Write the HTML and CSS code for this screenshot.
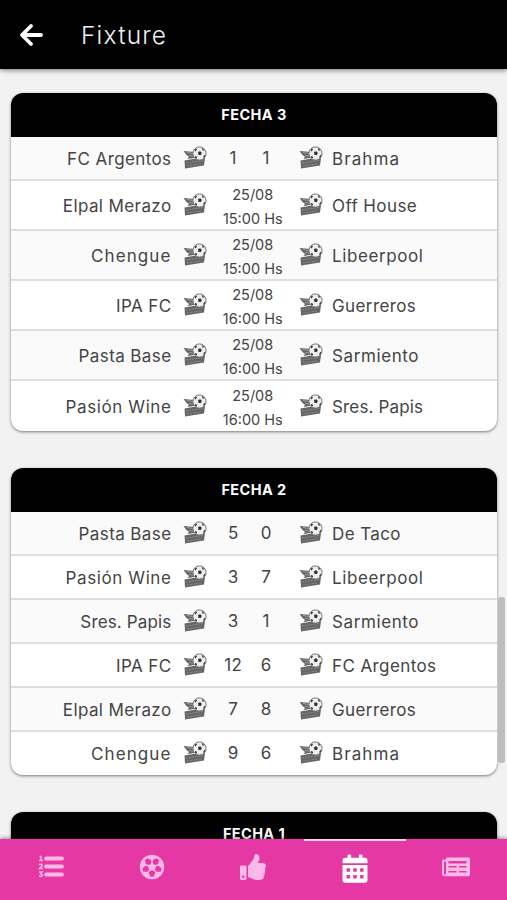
FILE: index.html
```
<!DOCTYPE html>
<html lang="es">
<head>
<meta charset="utf-8">
<title>Fixture</title>
<link rel="stylesheet" href="styles.css">
</head>
<body>
<svg class="defs" width="0" height="0">
  <symbol id="crest" viewBox="0 0 24 24">
    <path d="M.5 5 12 6l-1 6-6.500 1L6 11 3.500 9z" fill="#666"/>
    <path d="M4 6.500l6 1M6 9.500l4 .5" stroke="#aaa" stroke-width=".8"/>
    <path d="M1.500 14.500 13 12.500l9-.5-1 7.500L2 22.500z" fill="#666"/>
    <path d="M3 17l17-2.500M4 20l14-2" stroke="#8c8c8c" stroke-width=".9" stroke-dasharray="2 1"/>
    <circle cx="16.500" cy="7.500" r="6.600" fill="#eee" stroke="#777" stroke-width="1"/>
    <path d="M15 6l2.200-.8 1.600 1.600-.8 2.200h-2.500zM11.500 4l1.500-1.500 1 1-1.500 2zM19 1.800l2.500 2.500-2 .5zM21 9.500l1.500-1-1 3h-1.500zM12 10l2 .7v1.800l-2-1z" fill="#333"/>
  </symbol>
</svg>
<header class="appbar">
  <svg class="back" viewBox="0 0 24 24"><path d="M12 3 3 12l9 9M4 12h18" fill="none" stroke="#fff" stroke-width="3.800" stroke-linecap="round" stroke-linejoin="round"/></svg>
  <h1>Fixture</h1>
</header>
<main>
  <section class="card">
    <h2>FECHA 3</h2>
    <div class="row"><span class="home">FC Argentos</span><svg class="crest"><use href="#crest"/></svg><div class="score"><b>1</b><b>1</b></div><svg class="crest"><use href="#crest"/></svg><span class="away wider">Brahma</span></div>
    <div class="row tall"><span class="home">Elpal Merazo</span><svg class="crest"><use href="#crest"/></svg><div class="date"><span>25/08</span><span>15:00 Hs</span></div><svg class="crest"><use href="#crest"/></svg><span class="away">Off House</span></div>
    <div class="row tall"><span class="home wider">Chengue</span><svg class="crest"><use href="#crest"/></svg><div class="date"><span>25/08</span><span>15:00 Hs</span></div><svg class="crest"><use href="#crest"/></svg><span class="away wide">Libeerpool</span></div>
    <div class="row tall"><span class="home">IPA FC</span><svg class="crest"><use href="#crest"/></svg><div class="date"><span>25/08</span><span>16:00 Hs</span></div><svg class="crest"><use href="#crest"/></svg><span class="away">Guerreros</span></div>
    <div class="row tall"><span class="home">Pasta Base</span><svg class="crest"><use href="#crest"/></svg><div class="date"><span>25/08</span><span>16:00 Hs</span></div><svg class="crest"><use href="#crest"/></svg><span class="away wide">Sarmiento</span></div>
    <div class="row tall"><span class="home wide">Pasión Wine</span><svg class="crest"><use href="#crest"/></svg><div class="date"><span>25/08</span><span>16:00 Hs</span></div><svg class="crest"><use href="#crest"/></svg><span class="away tight">Sres. Papis</span></div>
  </section>
  <section class="card">
    <h2>FECHA 2</h2>
    <div class="row"><span class="home">Pasta Base</span><svg class="crest"><use href="#crest"/></svg><div class="score"><b>5</b><b>0</b></div><svg class="crest"><use href="#crest"/></svg><span class="away">De Taco</span></div>
    <div class="row"><span class="home wide">Pasión Wine</span><svg class="crest"><use href="#crest"/></svg><div class="score"><b>3</b><b>7</b></div><svg class="crest"><use href="#crest"/></svg><span class="away wide">Libeerpool</span></div>
    <div class="row"><span class="home tight">Sres. Papis</span><svg class="crest"><use href="#crest"/></svg><div class="score"><b>3</b><b>1</b></div><svg class="crest"><use href="#crest"/></svg><span class="away wide">Sarmiento</span></div>
    <div class="row"><span class="home">IPA FC</span><svg class="crest"><use href="#crest"/></svg><div class="score"><b>12</b><b>6</b></div><svg class="crest"><use href="#crest"/></svg><span class="away">FC Argentos</span></div>
    <div class="row"><span class="home">Elpal Merazo</span><svg class="crest"><use href="#crest"/></svg><div class="score"><b>7</b><b>8</b></div><svg class="crest"><use href="#crest"/></svg><span class="away">Guerreros</span></div>
    <div class="row"><span class="home wider">Chengue</span><svg class="crest"><use href="#crest"/></svg><div class="score"><b>9</b><b>6</b></div><svg class="crest"><use href="#crest"/></svg><span class="away wider">Brahma</span></div>
  </section>
  <section class="card">
    <h2>FECHA 1</h2>
  </section>
</main>
<div class="scrollbar"></div>
<nav class="tabs">
  <a><svg width="26" height="26" viewBox="0 0 26 26"><path d="M8 4.500h16M8 12.500h16M8 20.500h16" stroke="currentColor" stroke-width="3.800" stroke-linecap="round"/><path d="M1.500 2.500h1.500v4M1 6.500h4M1 10.500h3v1.500l-2.500 2.500h3.500M1 18h3.200l-1.500 2q2 0 1.500 1.800-1 1.200-3.200.3" fill="none" stroke="currentColor" stroke-width="1.400"/></svg></a>
  <a><svg width="26" height="26" viewBox="-13 -13 26 26"><g fill="currentColor" stroke="currentColor"><circle r="11" fill="none" stroke-width="2.400"/><path d="M0-3.700 3.500-1.100 2.200 3h-4.400l-1.300-4.100z" stroke-width="1"/><g id="panel"><path d="M0-3v-4" stroke-width="1.500"/><path d="M0-6 4.300-9 4.300-11h-8.600v2z" stroke="none"/></g><use href="#panel" transform="rotate(72)"/><use href="#panel" transform="rotate(144)"/><use href="#panel" transform="rotate(216)"/><use href="#panel" transform="rotate(288)"/></g></svg></a>
  <a><svg width="26" height="26" viewBox="0 0 512 512"><path fill="currentColor" d="M104 224H24c-13.300 0-24 10.700-24 24v240c0 13.300 10.700 24 24 24h80c13.300 0 24-10.700 24-24V248c0-13.300-10.700-24-24-24zM64 472c-13.300 0-24-10.700-24-24s10.700-24 24-24 24 10.700 24 24-10.700 24-24 24zM384 81.500c0 42.400-26 66.200-33.300 94.500h101.700c33.400 0 59.400 27.700 59.600 58.100.1 18-7.600 37.300-19.500 49.300 9.800 23.300 8.200 56-9.300 79.500 8.700 25.900-.1 57.700-16.400 74.800 4.300 17.600 2.200 32.600-6.100 44.600C440.200 511.600 389.600 512 346.800 512H344c-48.300 0-87.800-17.600-119.600-31.700-16-7.100-36.800-15.900-52.700-16.200-6.500-.1-11.800-5.500-11.800-12V238.300c0-3.200 1.300-6.300 3.600-8.500 39.600-39.100 56.600-80.600 89.100-113.100 14.800-14.800 20.200-37.200 25.400-58.900C282.500 39.300 291.800 0 312 0c24 0 72 8 72 81.500z"/></svg></a>
  <a class="active"><svg width="26" height="29" viewBox="0 0 26 29"><path fill="currentColor" fill-rule="evenodd" d="M5.500 3.800V1.500Q5.500.5 6.500.5h1.600q1 0 1 1v2.300h7.800V1.500q0-1 1-1h1.600q1 0 1 1v2.300h2.200q2.800 0 2.800 2.800v2.600H.5V6.600q0-2.800 2.800-2.800zM.5 11h25v15q0 2.800-2.800 2.800H3.300Q.5 28.800.5 26zm4 3.300v3.500H8v-3.500zm6.800 0v3.500h3.500v-3.500zm6.800 0v3.500h3.500v-3.500zM4.500 21v3.500H8V21zm6.800 0v3.500h3.500V21zm6.800 0v3.500h3.500V21z"/></svg></a>
  <a><svg width="28" height="20" viewBox="0 0 28 20"><path fill="currentColor" fill-rule="evenodd" d="M5 .5h21.500q1.500 0 1.500 1.500v15.500q0 1.800-1.800 1.800H3Q0 19.300 0 16.500V4q0-1.500 1.500-1.500H4v-1Q4 .5 5 .5zM2 4.500v12q0 1 1 1t1-1v-12zM6.500 4v2.500h18V4zm0 5v1.500h8V9zm10.500 0v1.500h7.500V9zM6.500 14v1.500h8V14zm10.500 0v1.500h7.500V14z"/></svg></a>
</nav>
</body>
</html>
```
FILE: styles.css
```
* { box-sizing: border-box; }
body {
  margin: 0;
  height: 900px;
  overflow: hidden;
  display: flex;
  flex-direction: column;
  background: #f2f2f2;
  color: #444;
  font-family: "Inter", "Liberation Sans", sans-serif;
}
.defs { position: absolute; }
.appbar {
  flex: none;
  height: 69px;
  padding: 1px 0 0 19px;
  display: flex;
  align-items: center;
  background: #000;
  box-shadow: 0 1px 5px rgba(0, 0, 0, .55);
  z-index: 1;
}
.back { width: 24px; height: 24px; }
h1 {
  margin: 0 0 0 38px;
  color: #f2f2f2;
  font-size: 24.500px;
  font-weight: 300;
  letter-spacing: 1.200px;
}
main {
  flex: 1;
  min-height: 0;
  overflow: hidden;
  padding: 24px 10px 0 11px;
}
.card {
  overflow: hidden;
  margin-bottom: 37.300px;
  border-radius: 12px;
  background: #fff;
  box-shadow: 0 1px 3px rgba(0, 0, 0, .5);
}
h2 {
  margin: 0;
  height: 44px;
  line-height: 44px;
  background: #000;
  color: #fff;
  text-align: center;
  font-size: 14.500px;
  font-weight: 700;
  letter-spacing: .4px;
}
.row {
  height: 44px;
  display: grid;
  grid-template-columns: 160.500px 11px 24px 92.500px 24px 9px 1fr;
  align-items: center;
  border-bottom: 2px solid #dedede;
  font-size: 17px;
  letter-spacing: .4px;
  white-space: nowrap;
}
.row:nth-child(even) { background: #fafafa; }
.tall { height: 50px; }
.row:last-child { border-bottom: 0; height: 43px; }
.tall:last-child { height: 49.500px; }
.home { grid-column: 1; text-align: right; padding-top: 2px; }
.away { grid-column: 7; padding-top: 2px; }
.wide { letter-spacing: .6px; }
.wider { letter-spacing: 1.100px; }
.tight { letter-spacing: .15px; }
.crest { width: 24px; height: 24px; }
.home + .crest { grid-column: 3; }
.score {
  display: grid;
  grid-template-columns: 33px 33px;
  justify-content: center;
  text-align: center;
  padding-right: 6px;
}
.score b { font-weight: 400; }
.date {
  display: flex;
  flex-direction: column;
  margin: 2px 0 -2px;
  text-align: center;
  font-size: 14.500px;
  line-height: 24px;
  letter-spacing: 0;
}
.scrollbar {
  position: absolute;
  right: 2px;
  top: 597px;
  width: 7px;
  height: 166px;
  border-radius: 3px;
  background: #bdbdbd;
}
.tabs {
  flex: none;
  height: 61px;
  display: grid;
  grid-template-columns: repeat(5, 1fr);
  background: #e638a5;
  box-shadow: 0 -1px 4px rgba(0, 0, 0, .4);
  z-index: 1;
}
.tabs a {
  height: 55px;
  display: flex;
  align-items: center;
  justify-content: center;
  color: #fbb9e6;
}
.tabs .active {
  height: 56px;
  border-top: 2px solid #fbd0ed;
  color: #fff;
}
```
